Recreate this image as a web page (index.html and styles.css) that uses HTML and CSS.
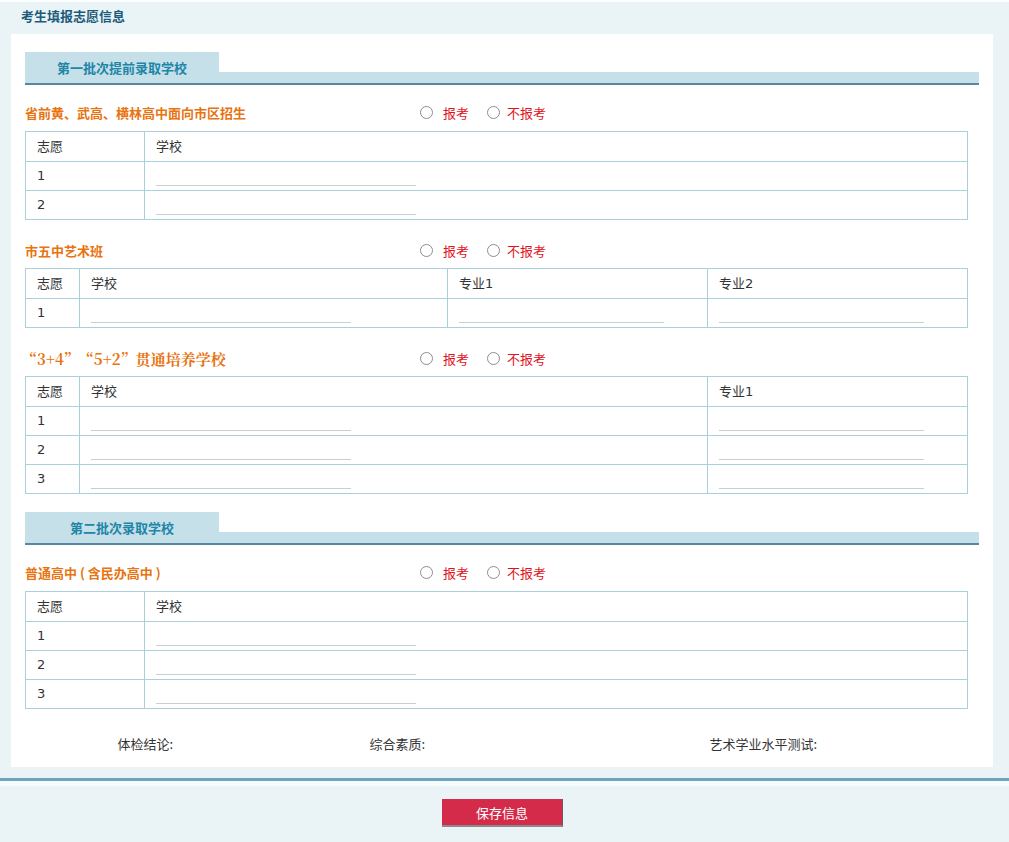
FILE: index.html
```html
<!DOCTYPE html>
<html lang="zh-CN">
<head>
<meta charset="utf-8">
<title>考生填报志愿信息</title>
<link rel="stylesheet" href="styles.css">
</head>
<body>
<div class="page">
  <div class="page-title">考生填报志愿信息</div>
  <div class="panel">
    <div class="tabbar"><div class="tab">第一批次提前录取学校</div><div class="tab-fill"></div></div>

    <div class="sec-head">
      <div class="sec-title">省前黄、武高、横林高中面向市区招生</div>
      <div class="radios">
        <label class="radio-opt"><span class="radio-dot"></span>报考</label>
        <label class="radio-opt"><span class="radio-dot"></span>不报考</label>
      </div>
    </div>
    <table class="grid">
      <colgroup><col class="c-no-wide"><col></colgroup>
      <tr class="head"><td>志愿</td><td>学校</td></tr>
      <tr><td>1</td><td class="in"><input class="line-input w260" type="text"></td></tr>
      <tr><td>2</td><td class="in"><input class="line-input w260" type="text"></td></tr>
    </table>

    <div class="sec-head">
      <div class="sec-title">市五中艺术班</div>
      <div class="radios">
        <label class="radio-opt"><span class="radio-dot"></span>报考</label>
        <label class="radio-opt"><span class="radio-dot"></span>不报考</label>
      </div>
    </div>
    <table class="grid">
      <colgroup><col class="c-no"><col class="c-school"><col class="c-major"><col></colgroup>
      <tr class="head"><td>志愿</td><td>学校</td><td>专业1</td><td>专业2</td></tr>
      <tr><td>1</td><td class="in"><input class="line-input w260" type="text"></td><td class="in"><input class="line-input w205" type="text"></td><td class="in"><input class="line-input w205" type="text"></td></tr>
    </table>

    <div class="sec-head">
      <div class="sec-title serif">“3+4”“5+2”贯通培养学校</div>
      <div class="radios">
        <label class="radio-opt"><span class="radio-dot"></span>报考</label>
        <label class="radio-opt"><span class="radio-dot"></span>不报考</label>
      </div>
    </div>
    <table class="grid">
      <colgroup><col class="c-no"><col class="c-school-wide"><col></colgroup>
      <tr class="head"><td>志愿</td><td>学校</td><td>专业1</td></tr>
      <tr><td>1</td><td class="in"><input class="line-input w260" type="text"></td><td class="in"><input class="line-input w205" type="text"></td></tr>
      <tr><td>2</td><td class="in"><input class="line-input w260" type="text"></td><td class="in"><input class="line-input w205" type="text"></td></tr>
      <tr><td>3</td><td class="in"><input class="line-input w260" type="text"></td><td class="in"><input class="line-input w205" type="text"></td></tr>
    </table>

    <div class="tabbar"><div class="tab">第二批次录取学校</div><div class="tab-fill"></div></div>

    <div class="sec-head">
      <div class="sec-title">普通高中 ( 含民办高中 )</div>
      <div class="radios">
        <label class="radio-opt"><span class="radio-dot"></span>报考</label>
        <label class="radio-opt"><span class="radio-dot"></span>不报考</label>
      </div>
    </div>
    <table class="grid">
      <colgroup><col class="c-no-wide"><col></colgroup>
      <tr class="head"><td>志愿</td><td>学校</td></tr>
      <tr><td>1</td><td class="in"><input class="line-input w260" type="text"></td></tr>
      <tr><td>2</td><td class="in"><input class="line-input w260" type="text"></td></tr>
      <tr><td>3</td><td class="in"><input class="line-input w260" type="text"></td></tr>
    </table>

    <div class="footer-info">
      <div class="fi fi-1">体检结论:</div>
      <div class="fi fi-2">综合素质:</div>
      <div class="fi fi-3">艺术学业水平测试:</div>
    </div>
  </div>
  <div class="actions">
    <button class="save-btn" type="button">保存信息</button>
  </div>
</div>
</body>
</html>
```

FILE: styles.css
```css
html, body {
  margin: 0;
  padding: 0;
}
body {
  background: #eaf4f7;
  font-family: "DejaVu Sans", "Noto Sans CJK SC", sans-serif;
  font-size: 13px;
  color: #333;
}
.page {
  border-top: 2px solid #fbfdfe;
}
.page-title {
  height: 32px;
  line-height: 28px;
  padding-left: 21px;
  font-family: "Noto Sans CJK SC", sans-serif;
  font-weight: bold;
  font-size: 13px;
  color: #1d5b7a;
}
.panel {
  margin: 0 16px 0 11px;
  background: #fff;
  padding: 18px 14px 0;
}
.tabbar {
  display: flex;
  align-items: flex-end;
  border-bottom: 2px solid #5488a4;
}
.tab {
  width: 194px;
  height: 31px;
  line-height: 32px;
  background: #c6e0ea;
  text-align: center;
  font-family: "Noto Sans CJK SC", sans-serif;
  font-weight: bold;
  font-size: 13px;
  color: #1e86a6;
}
.tab-fill {
  flex: 1;
  height: 11px;
  background: #c6e0ea;
}
.grid + .tabbar {
  margin-top: 18px;
}
.sec-head {
  display: flex;
  align-items: center;
  height: 20px;
  margin: 20px 0 8px;
}
.tabbar + .sec-head {
  margin-top: 17px;
  margin-bottom: 9px;
}
.sec-title {
  width: 395px;
  flex: none;
  font-family: "Noto Sans CJK SC", sans-serif;
  font-weight: bold;
  font-size: 13px;
  color: #e8730f;
  white-space: nowrap;
}
.sec-title.serif {
  font-family: "Noto Serif CJK SC", "Liberation Serif", serif;
  font-size: 15px;
  font-weight: bold;
  margin-left: -3px;
  width: 398px;
}
.radios {
  display: flex;
  align-items: center;
}
.radio-opt {
  display: inline-flex;
  align-items: center;
  margin-right: 18px;
  font-family: "Noto Sans CJK SC", sans-serif;
  font-size: 13px;
  color: #e0141e;
}
.radio-opt + .radio-opt {
  margin-right: 0;
}
.radio-dot {
  width: 11px;
  height: 11px;
  border: 1px solid #8d8d8d;
  border-radius: 50%;
  background: #fff;
  margin-right: 10px;
}
.radio-opt + .radio-opt .radio-dot {
  margin-right: 7px;
}
.grid {
  width: 943px;
  border-collapse: collapse;
  table-layout: fixed;
}
.grid tr {
  height: 29px;
}
.grid tr.head {
  height: 30px;
}
.grid td {
  border: 1px solid #a9cfdc;
  padding: 0 11px;
  line-height: 18px;
  vertical-align: middle;
  font-size: 13px;
  color: #333;
}
.grid td.in {
  vertical-align: bottom;
  padding-bottom: 4px;
}
.c-no-wide { width: 119px; }
.c-no { width: 54px; }
.c-school { width: 368px; }
.c-major { width: 260px; }
.c-school-wide { width: 628px; }
.line-input {
  display: block;
  box-sizing: border-box;
  height: 18px;
  padding: 0;
  margin: 0;
  border: 0;
  border-bottom: 1px solid #c6cfd4;
  background: transparent;
  outline: none;
  font-family: "Noto Sans CJK SC", sans-serif;
  font-size: 12px;
  line-height: 16px;
}
.w260 { width: 260px; }
.w205 { width: 205px; }
.footer-info {
  display: flex;
  height: 20px;
  line-height: 20px;
  margin-top: 25px;
  padding-bottom: 13px;
  font-family: "Noto Sans CJK SC", sans-serif;
}
.fi {
  text-align: right;
  flex: none;
  color: #333;
}
.fi-1 { width: 148px; }
.fi-2 { width: 252px; }
.fi-3 { width: 392px; }
.actions {
  margin-top: 11px;
  border-top: 3px solid #6ea5bd;
  background: linear-gradient(#f6fbfc 0, #f6fbfc 5px, #eaf4f7 5px);
  padding: 18px 0 16px;
  display: flex;
  justify-content: center;
}
.save-btn {
  width: 121px;
  height: 28px;
  margin-right: 4px;
  background: #d42b4b;
  color: #fff;
  font-family: "Noto Sans CJK SC", sans-serif;
  font-size: 13px;
  border: 0;
  border-right: 1px solid #6b5a5e;
  border-bottom: 2px solid #8a8a8a;
  padding: 0;
}
```
